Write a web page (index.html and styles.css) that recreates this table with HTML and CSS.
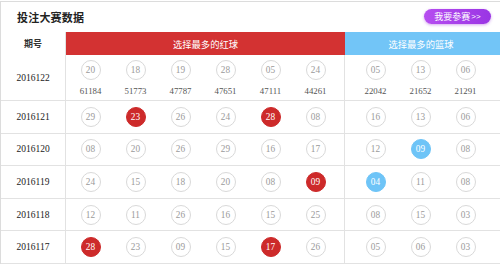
FILE: index.html
```html
<!DOCTYPE html>
<html lang="zh-CN">
<head>
<meta charset="utf-8">
<title>投注大赛数据</title>
<link rel="stylesheet" href="styles.css">
</head>
<body>
<div class="panel">
  <div class="panel-head">
    <h2 class="title">投注大赛数据</h2>
    <a class="join">我要参赛<span class="arr">&gt;&gt;</span></a>
  </div>
  <div class="table">
    <div class="row thead">
      <div class="period">期号</div>
      <div class="red-sec hd">选择最多的红球</div>
      <div class="blue-sec hd">选择最多的篮球</div>
    </div>
    <div class="row first">
      <div class="period">2016122</div>
      <div class="red-sec balls">
        <div class="cell"><span class="ball">20</span><span class="cnt">61184</span></div>
        <div class="cell"><span class="ball">18</span><span class="cnt">51773</span></div>
        <div class="cell"><span class="ball">19</span><span class="cnt">47787</span></div>
        <div class="cell"><span class="ball">28</span><span class="cnt">47651</span></div>
        <div class="cell"><span class="ball">05</span><span class="cnt">47111</span></div>
        <div class="cell"><span class="ball">24</span><span class="cnt">44261</span></div>
      </div>
      <div class="blue-sec balls">
        <div class="cell"><span class="ball">05</span><span class="cnt">22042</span></div>
        <div class="cell"><span class="ball">13</span><span class="cnt">21652</span></div>
        <div class="cell"><span class="ball">06</span><span class="cnt">21291</span></div>
      </div>
    </div>
    <div class="row">
      <div class="period">2016121</div>
      <div class="red-sec balls">
        <div class="cell"><span class="ball">29</span></div>
        <div class="cell"><span class="ball hit-red">23</span></div>
        <div class="cell"><span class="ball">26</span></div>
        <div class="cell"><span class="ball">24</span></div>
        <div class="cell"><span class="ball hit-red">28</span></div>
        <div class="cell"><span class="ball">08</span></div>
      </div>
      <div class="blue-sec balls">
        <div class="cell"><span class="ball">16</span></div>
        <div class="cell"><span class="ball">13</span></div>
        <div class="cell"><span class="ball">06</span></div>
      </div>
    </div>
    <div class="row">
      <div class="period">2016120</div>
      <div class="red-sec balls">
        <div class="cell"><span class="ball">08</span></div>
        <div class="cell"><span class="ball">20</span></div>
        <div class="cell"><span class="ball">26</span></div>
        <div class="cell"><span class="ball">29</span></div>
        <div class="cell"><span class="ball">16</span></div>
        <div class="cell"><span class="ball">17</span></div>
      </div>
      <div class="blue-sec balls">
        <div class="cell"><span class="ball">12</span></div>
        <div class="cell"><span class="ball hit-blue">09</span></div>
        <div class="cell"><span class="ball">08</span></div>
      </div>
    </div>
    <div class="row">
      <div class="period">2016119</div>
      <div class="red-sec balls">
        <div class="cell"><span class="ball">24</span></div>
        <div class="cell"><span class="ball">15</span></div>
        <div class="cell"><span class="ball">18</span></div>
        <div class="cell"><span class="ball">20</span></div>
        <div class="cell"><span class="ball">08</span></div>
        <div class="cell"><span class="ball hit-red">09</span></div>
      </div>
      <div class="blue-sec balls">
        <div class="cell"><span class="ball hit-blue">04</span></div>
        <div class="cell"><span class="ball">11</span></div>
        <div class="cell"><span class="ball">08</span></div>
      </div>
    </div>
    <div class="row">
      <div class="period">2016118</div>
      <div class="red-sec balls">
        <div class="cell"><span class="ball">12</span></div>
        <div class="cell"><span class="ball">11</span></div>
        <div class="cell"><span class="ball">26</span></div>
        <div class="cell"><span class="ball">16</span></div>
        <div class="cell"><span class="ball">15</span></div>
        <div class="cell"><span class="ball">25</span></div>
      </div>
      <div class="blue-sec balls">
        <div class="cell"><span class="ball">08</span></div>
        <div class="cell"><span class="ball">15</span></div>
        <div class="cell"><span class="ball">03</span></div>
      </div>
    </div>
    <div class="row">
      <div class="period">2016117</div>
      <div class="red-sec balls">
        <div class="cell"><span class="ball hit-red">28</span></div>
        <div class="cell"><span class="ball">23</span></div>
        <div class="cell"><span class="ball">09</span></div>
        <div class="cell"><span class="ball">15</span></div>
        <div class="cell"><span class="ball hit-red">17</span></div>
        <div class="cell"><span class="ball">26</span></div>
      </div>
      <div class="blue-sec balls">
        <div class="cell"><span class="ball">05</span></div>
        <div class="cell"><span class="ball">06</span></div>
        <div class="cell"><span class="ball">03</span></div>
      </div>
    </div>
  </div>
</div>
</body>
</html>
```
FILE: styles.css
```css
html, body {
  margin: 0;
  padding: 0;
  background: #fff;
  overflow: hidden;
}
body {
  font-family: "Liberation Serif", "Noto Sans CJK SC", serif;
  color: #333;
}
.panel {
  margin-top: 1px;
  width: 504px;
  border-top: 1px solid #dcdcdc;
  border-left: 1px solid #dcdcdc;
  box-sizing: border-box;
}
.panel-head {
  height: 30px;
  display: flex;
  align-items: center;
  justify-content: space-between;
  width: 499px;
  box-sizing: border-box;
  padding: 0 9px 0 16px;
}
.title {
  margin: 0;
  font-family: "Noto Sans CJK SC", sans-serif;
  font-size: 11px;
  font-weight: 700;
  color: #222;
  letter-spacing: 0.2px;
}
.join {
  display: flex;
  align-items: center;
  justify-content: center;
  width: 67px;
  height: 15px;
  margin-top: -2px;
  border-radius: 8px;
  background: linear-gradient(90deg, #b64df0, #9a35e4);
  box-shadow: 0 1px 3px rgba(160, 60, 220, 0.45);
  color: #fff;
  font-family: "Noto Sans CJK SC", sans-serif;
  font-size: 9px;
  line-height: 15px;
}
.arr {
  font-family: "Liberation Sans", sans-serif;
  font-size: 8px;
  margin-left: 1px;
}
.table {
  display: flex;
  flex-direction: column;
}
.row {
  display: grid;
  grid-template-columns: 65px 279px 1fr;
  height: 32.6px;
  border-bottom: 1px solid #e2e2e2;
  box-sizing: border-box;
}
.row.thead {
  height: 23px;
  border-bottom: 0;
}
.row.first {
  height: 46px;
}
.period {
  display: flex;
  align-items: center;
  justify-content: center;
  border-right: 1px solid #e2e2e2;
  font-size: 9.5px;
  color: #222;
}
.thead .period {
  font-family: "Noto Sans CJK SC", sans-serif;
  font-size: 9px;
  font-weight: 700;
  color: #333;
}
.hd {
  display: flex;
  align-items: center;
  justify-content: center;
  font-family: "Noto Sans CJK SC", sans-serif;
  font-size: 9.3px;
  color: #fff;
}
.red-sec.hd {
  background: #d33232;
}
.blue-sec.hd {
  background: #72c5f7;
  padding-right: 7px;
}
.balls {
  display: flex;
  align-items: center;
}
.red-sec.balls {
  border-right: 1px solid #e2e2e2;
  padding-left: 2px;
}
.blue-sec.balls {
  padding-left: 8px;
}
.cell {
  width: 45px;
  display: flex;
  flex-direction: column;
  align-items: center;
}
.first .balls {
  align-items: flex-start;
}
.first .cell {
  padding-top: 5px;
}
.ball {
  width: 20px;
  height: 20px;
  box-sizing: border-box;
  border: 1px solid #d9d9d9;
  border-radius: 50%;
  display: flex;
  align-items: center;
  justify-content: center;
  font-size: 9.3px;
  color: #9a9a9a;
}
.ball.hit-red {
  background: #cd2a2a;
  border-color: #cd2a2a;
  color: #fff;
}
.ball.hit-blue {
  background: #6ec4f7;
  border-color: #6ec4f7;
  color: #fff;
}
.cnt {
  margin-top: 6px;
  font-size: 8.8px;
  line-height: 11px;
  color: #555;
}
```
